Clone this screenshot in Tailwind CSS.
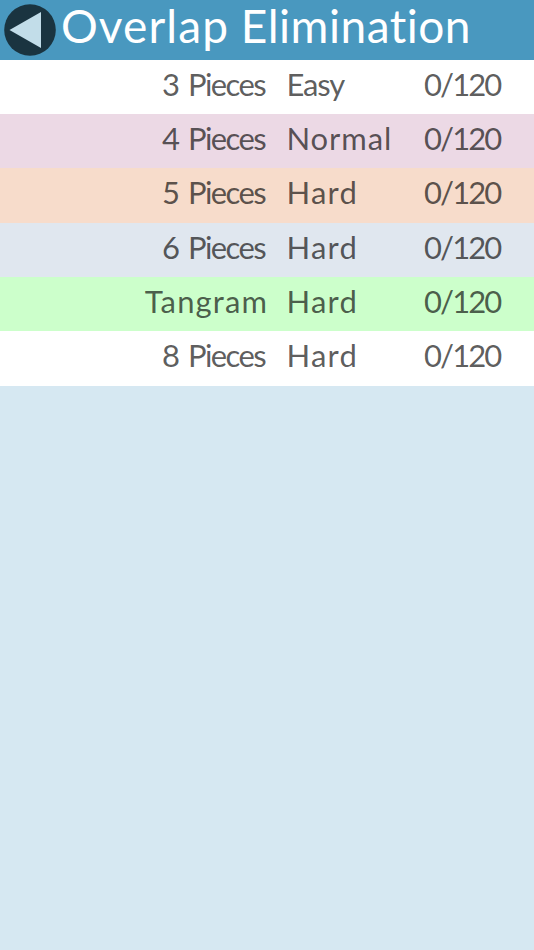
<!DOCTYPE html>
<html lang="en">
<head>
  <meta charset="UTF-8" />
  <meta name="viewport" content="width=device-width, initial-scale=1.0"/>
  <title>Overlap Elimination</title>
  <script src="https://cdn.jsdelivr.net/npm/@tailwindcss/browser@4"></script>
</head>
<body class="bg-[#d6e8f2] min-h-screen font-['Lato',sans-serif]">

  <header class="flex items-start h-[59.5px] bg-[#4998bf] pl-1">
    <button class="mt-1 size-[52px] shrink-0" aria-label="Back">
      <svg viewBox="0 0 52 52" class="size-full">
        <circle cx="26" cy="26" r="25.8" fill="#1a3440"/>
        <path d="M5.5 26 L37 8 V44 Z" fill="#c2dde9"/>
      </svg>
    </button>
    <h1 class="ml-[5px] text-[46px] leading-[51px] text-white whitespace-nowrap"><span class="inline-block tracking-[1.1px]">Overlap</span> <span class="inline-block tracking-[0.5px]">Elimination</span></h1>
  </header>

  <main class="text-[31px] leading-[48px] text-black/65 whitespace-nowrap">
    <div class="flex h-[54.4px] bg-white">
      <span class="w-[265px] text-right">3 <span class="tracking-[-1.6px]">Pieces</span></span>
      <span class="ml-[21.5px] w-[137.5px] tracking-[-1.2px]">Easy</span>
      <span class="tracking-[-1.9px]">0/120</span>
    </div>
    <div class="flex h-[54.4px] bg-[#ecd9e5]">
      <span class="w-[265px] text-right">4 <span class="tracking-[-1.6px]">Pieces</span></span>
      <span class="ml-[21.5px] w-[137.5px] tracking-[0.9px]">Normal</span>
      <span class="tracking-[-1.9px]">0/120</span>
    </div>
    <div class="flex h-[54.4px] bg-[#f7dccb]">
      <span class="w-[265px] text-right">5 <span class="tracking-[-1.6px]">Pieces</span></span>
      <span class="ml-[21.5px] w-[137.5px] tracking-[1.2px]">Hard</span>
      <span class="tracking-[-1.9px]">0/120</span>
    </div>
    <div class="flex h-[54.4px] bg-[#e0e7ef]">
      <span class="w-[265px] text-right">6 <span class="tracking-[-1.6px]">Pieces</span></span>
      <span class="ml-[21.5px] w-[137.5px] tracking-[1.2px]">Hard</span>
      <span class="tracking-[-1.9px]">0/120</span>
    </div>
    <div class="flex h-[54.4px] bg-[#ccffcb]">
      <span class="w-[268px] text-right tracking-[1.1px]">Tangram</span>
      <span class="ml-[18.5px] w-[137.5px] tracking-[1.2px]">Hard</span>
      <span class="tracking-[-1.9px]">0/120</span>
    </div>
    <div class="flex h-[54.4px] bg-white">
      <span class="w-[265px] text-right">8 <span class="tracking-[-1.6px]">Pieces</span></span>
      <span class="ml-[21.5px] w-[137.5px] tracking-[1.2px]">Hard</span>
      <span class="tracking-[-1.9px]">0/120</span>
    </div>
  </main>

</body>
</html>
